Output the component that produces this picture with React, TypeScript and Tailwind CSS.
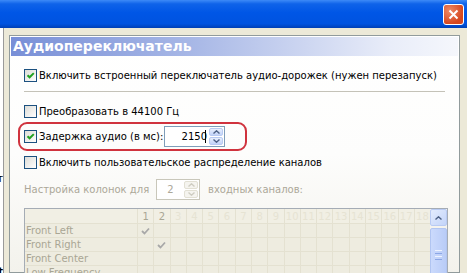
import React from "react";

const FONT = "font-['Tahoma','DejaVu_Sans',sans-serif]";

function Check({ checked }: { checked?: boolean }) {
  return (
    <span className="flex size-[13px] shrink-0 items-center justify-center border border-[#1C5180] bg-linear-to-br from-[#DCDCD7] to-white">
      {checked && (
        <svg viewBox="0 0 11 11" className="size-[11px]">
          <path d="M2.5 5.2L4.6 7.3L8.8 3.1" stroke="#21A121" strokeWidth="2" fill="none" />
        </svg>
      )}
    </span>
  );
}

function Arrow({ up, color }: { up?: boolean; color: string }) {
  return (
    <svg viewBox="0 0 7 4" className="h-[4px] w-[7px]">
      <path d={up ? "M0.5 3.5L3.5 0.8L6.5 3.5" : "M0.5 0.5L3.5 3.2L6.5 0.5"} stroke={color} strokeWidth="1.4" fill="none" />
    </svg>
  );
}

function SpinButtons({ disabled }: { disabled?: boolean }) {
  const btn = disabled
    ? "border-[#E2E0D4] bg-[#F5F4EF]"
    : "border-[#B9CBF3] bg-linear-to-b from-[#E8EFFD] to-[#C2D3F8]";
  const c = disabled ? "#CFCDC2" : "#4D6185";
  return (
    <div className="flex w-[15px] flex-col gap-px py-px pr-px">
      <div className={`flex flex-1 items-center justify-center rounded-[2px] border ${btn}`}>
        <Arrow up color={c} />
      </div>
      <div className={`flex flex-1 items-center justify-center rounded-[2px] border ${btn}`}>
        <Arrow color={c} />
      </div>
    </div>
  );
}

const channels = ["Front Left", "Front Right", "Front Center", "Low Frequency"];
const cols = Array.from({ length: 18 }, (_, i) => i + 1);

export default function App() {
  return (
    <div className={`flex h-[273px] w-[467px] flex-col overflow-hidden bg-[#ECE9D8] text-[10px] ${FONT}`}>
      {/* title bar */}
      <div className="flex h-[28px] shrink-0 justify-end bg-[linear-gradient(#3D8AF7,#0F63E9_14%,#0056E6_45%,#0053E0_85%,#0040B5)] pr-[3px] pt-[4px]">
        <div className="flex size-[21px] items-center justify-center rounded-[3px] border border-white bg-[radial-gradient(circle_at_30%_30%,#EE8A66,#D6471F_70%)]">
          <svg viewBox="0 0 11 11" className="size-[11px]">
            <path d="M1.5 1.5L9.5 9.5M9.5 1.5L1.5 9.5" stroke="white" strokeWidth="2" />
          </svg>
        </div>
      </div>

      <div className="flex min-h-0 flex-1">
        {/* left pane, cut off */}
        <div className="flex w-[4px] shrink-0 flex-col overflow-hidden border-r border-[#9A9A9A] bg-white text-black">
          <div className="mt-[143px] flex justify-end whitespace-nowrap">Каналы: Цент</div>
          <div className="mt-[78px] flex justify-end whitespace-nowrap font-bold">Default</div>
        </div>

        {/* main page */}
        <div className="ml-[5px] mt-[7px] flex w-[451px] flex-col border border-[#919B9C] bg-[linear-gradient(#FFFFFF,#FDFDFC_50%,#F3F2EC)] p-px">
          <div className="h-[19px] bg-[linear-gradient(to_right,#788FD7,#A7B7E6_40%,#E9EDF9_85%,#F5F7FC)] pl-[2px] text-[14px] font-bold leading-[19px] text-white">
            Аудиопереключатель
          </div>

          <div className="flex flex-col pl-[13px] text-black">
            <div className="mt-[13px] flex h-[13px] items-center gap-[2px]">
              <Check checked />
              <span>Включить встроенный переключатель аудио-дорожек (нужен перезапуск)</span>
            </div>

            <div className="mt-[9px] h-px w-[421px] bg-[#C4C2B8]" />

            <div className="mt-[13px] flex h-[13px] items-center gap-[2px]">
              <Check />
              <span>Преобразовать в 44100 Гц</span>
            </div>

            <div className="-ml-[6px] mt-[4px] flex h-[29px] w-[229px] items-center rounded-[9px] border-2 border-[#D0333E] pl-[4px]">
              <Check checked />
              <span className="ml-[2px] w-[125px]">Задержка аудио (в мс):</span>
              <div className="flex h-[21px] w-[61px] border border-[#7F9DB9] bg-white">
                <div className="flex flex-1 items-center justify-end pr-[3px]">
                  <span>2150</span>
                  <span className="-ml-[2px] h-[13px] w-px bg-black" />
                </div>
                <SpinButtons />
              </div>
            </div>

            <div className="mt-[5px] flex h-[13px] items-center gap-[2px]">
              <Check />
              <span>Включить пользовательское распределение каналов</span>
            </div>

            <div className="mt-[10px] flex h-[21px] items-center text-[#ACA899]">
              <span className="w-[132px]">Настройка колонок для</span>
              <div className="flex h-[21px] w-[44px] border border-[#C9C7BA] bg-white">
                <div className="flex flex-1 items-center justify-center">2</div>
                <SpinButtons disabled />
              </div>
              <span className="ml-[8px]">входных каналов:</span>
            </div>

            <div className="mt-[8px] flex h-[80px] w-[424px] border border-[#A5ACB5] bg-[#EEECE0] text-[#A9A694]">
              <div className="flex flex-1 flex-col">
                <div className="flex h-[15px] border-b border-[#E4E1D1] bg-[#F1EFE4]">
                  <div className="w-[112px]" />
                  {cols.map((c) => (
                    <div
                      key={c}
                      className={`flex flex-1 items-center justify-center border-l border-[#E4E1D1] ${c <= 2 ? "text-[#A9A694]" : "text-[#E6E3D3]"}`}
                    >
                      {c}
                    </div>
                  ))}
                </div>
                {channels.map((ch, r) => (
                  <div key={ch} className="flex h-[14px] border-b border-[#E4E1D1]">
                    <div className="w-[112px] pl-[1px] leading-[14px]">{ch}</div>
                    {cols.map((c) => (
                      <div key={c} className="flex flex-1 items-center justify-center border-l border-[#E4E1D1]">
                        {c === r + 1 && r < 2 && (
                          <svg viewBox="0 0 9 8" className="h-[8px] w-[9px]">
                            <path d="M1 4L3.5 6.5L8 1.5" stroke="#A8A8A8" strokeWidth="1.8" fill="none" />
                          </svg>
                        )}
                      </div>
                    ))}
                  </div>
                ))}
              </div>
              {/* scrollbar */}
              <div className="flex w-[17px] flex-col bg-[#F4F3EE]">
                <div className="flex h-[17px] items-center justify-center rounded-[2px] border border-[#B9CBF3] bg-linear-to-br from-[#E3ECFD] to-[#C3D4F9]">
                  <Arrow up color="#4D6185" />
                </div>
                <div className="mt-[2px] flex flex-1 flex-col items-center rounded-[2px] border border-[#B1C5F1] bg-linear-to-r from-[#CBDAFC] to-[#B9CCF7] pt-[21px]">
                  <div className="flex flex-col gap-[2px]">
                    <div className="h-px w-[7px] bg-[#EEF3FE]" />
                    <div className="h-px w-[7px] bg-[#8CA7E5]" />
                    <div className="h-px w-[7px] bg-[#EEF3FE]" />
                    <div className="h-px w-[7px] bg-[#8CA7E5]" />
                  </div>
                </div>
              </div>
            </div>
          </div>
        </div>
      </div>
    </div>
  );
}
